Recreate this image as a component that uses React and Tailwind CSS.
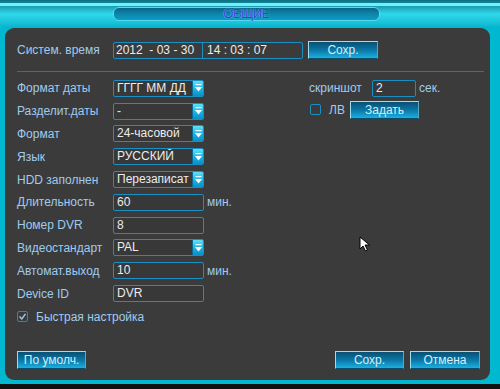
import React from 'react';

const font = { fontFamily: '"Liberation Sans", Arial, sans-serif' };

const Arrow = () => (
  <div className="w-[11px] h-full bg-gradient-to-b from-[#5fe0f8] via-[#19b6e6] to-[#0a8fc8] flex items-center justify-center border-l border-[#0a6a90]">
    <svg width="9" height="10" viewBox="0 0 9 10">
      <rect x="1.5" y="1" width="6" height="1.2" fill="#e8f8ff" />
      <polygon points="1,4 8,4 4.5,8.5" fill="#ffffff" />
    </svg>
  </div>
);

const Input = ({ value, w = 'w-[91px]', select }) => (
  <div className={`${w} h-[17px] border border-[#1a8fc4] rounded-[2px] bg-[#383838] flex items-stretch overflow-hidden`}>
    <span className="flex-1 pl-[3px] text-[#ececec] text-[12px] leading-[15px] whitespace-nowrap">{value}</span>
    {select && <Arrow />}
  </div>
);

const Btn = ({ children, w = 'w-[70px]' }) => (
  <div className={`${w} h-[18px] border border-t-[#9fdcf0] border-l-[#9fdcf0] border-b-[#0a4a66] border-r-[#5aa8c0] bg-gradient-to-b from-[#0a4f73] via-[#0a77a6] to-[#1bb0e0] flex items-center justify-center text-[12px] text-[#d6eefa]`}>
    {children}
  </div>
);

const Row = ({ label, children }) => (
  <div className="h-[22.8px] flex items-center">
    <span className="w-[96px] text-[#9fcbef] text-[12px] whitespace-nowrap">{label}</span>
    {children}
  </div>
);

const Unit = ({ children }) => <span className="ml-[3px] text-[#9fcbef] text-[12px]">{children}</span>;

export default function App() {
  return (
    <div style={font} className="w-[500px] h-[389px] bg-[#00b8d0] flex flex-col overflow-hidden relative">
      <div className="h-[28px] shrink-0 relative bg-gradient-to-b from-[#0a7080] via-[#30d8ec] to-[#00b4cc]">
        <div className="absolute top-[3px] left-0 right-0 h-[3px] bg-[#6ef0ff]"></div>
        <div className="absolute left-[113px] top-[7px] w-[267px] h-[14px] rounded-[6px] border border-[#58d8ec] bg-gradient-to-b from-[#0a6486] via-[#0c86ac] to-[#0c9cc4]"></div>
        <div className="absolute left-[113px] top-[6px] w-[267px] h-[16px] flex items-center justify-center">
          <span className="text-[13px] leading-[16px] text-[#3040e0] tracking-[-0.5px]" style={{ textShadow: '0 0 1px #b0f0ff' }}>ОБЩИЕ</span>
        </div>
      </div>

      <div className="ml-[5px] mr-[10px] h-[352px] shrink-0 rounded-[9px] bg-[#3b3b3b] pl-[12px] pr-[5px] pt-[13px] flex flex-col">
        <div className="flex items-center h-[18px]">
          <span className="w-[96px] text-[#9fcbef] text-[12px]">Систем. время</span>
          <div className="w-[190px] h-[17px] border border-[#1a8fc4] rounded-[2px] flex items-center text-[#ececec] text-[12px]">
            <span className="w-[89px] pl-[2px] whitespace-pre border-r border-[#1a8fc4] h-full leading-[15px]">2012  - 03 - 30</span>
            <span className="pl-[4px] whitespace-pre leading-[15px]">14 : 03 : 07</span>
          </div>
          <div className="ml-[5px]"><Btn>Сохр.</Btn></div>
        </div>
        <div className="mt-[12px] mr-[1px] h-[1px] bg-[#0b80a8]"></div>

        <div className="mt-[5px] flex">
          <div className="w-[292px] flex flex-col">
            <Row label="Формат даты"><Input value="ГГГГ ММ ДД" select /></Row>
            <Row label="Разделит.даты"><Input value="-" select /></Row>
            <Row label="Формат"><Input value="24-часовой" select /></Row>
            <Row label="Язык"><Input value="РУССКИЙ" select /></Row>
            <Row label="HDD заполнен"><Input value="Перезаписат" select /></Row>
            <Row label="Длительность"><Input value="60" /><Unit>мин.</Unit></Row>
            <Row label="Номер DVR"><Input value="8" /></Row>
            <Row label="Видеостандарт"><Input value="PAL" select /></Row>
            <Row label="Автомат.выход"><Input value="10" /><Unit>мин.</Unit></Row>
            <Row label="Device ID"><Input value="DVR" /></Row>
            <div className="h-[24px] flex items-center">
              <div className="w-[11px] h-[11px] border border-[#1a8fc4] rounded-[2px] flex items-center justify-center mr-[8px]">
                <svg width="9" height="9" viewBox="0 0 9 9"><polyline points="1.5,4.5 3.8,7 7.5,1.8" fill="none" stroke="#9fcbef" strokeWidth="1.4" /></svg>
              </div>
              <span className="text-[#9fcbef] text-[12px]">Быстрая настройка</span>
            </div>
          </div>
          <div className="flex flex-col">
            <div className="h-[22.8px] flex items-center">
              <span className="w-[63px] text-[#9fcbef] text-[12px]">скриншот</span>
              <Input value="2" w="w-[44px]" />
              <Unit>сек.</Unit>
            </div>
            <div className="h-[20px] flex items-center">
              <div className="w-[11px] h-[11px] border border-[#1a8fc4] rounded-[2px] ml-[1px] mr-[8px]"></div>
              <span className="w-[21px] text-[#9fcbef] text-[12px]">ЛВ</span>
              <Btn w="w-[69px]">Задать</Btn>
            </div>
          </div>
        </div>

        <div className="mt-auto mb-[11px] flex items-center">
          <Btn w="w-[69px]">По умолч.</Btn>
          <div className="ml-auto flex gap-[6px] mr-[5px]">
            <Btn w="w-[69px]">Сохр.</Btn>
            <Btn w="w-[70px]">Отмена</Btn>
          </div>
        </div>
      </div>
      <div className="h-[4px] shrink-0"></div>
      <div className="flex-1 bg-[#101010]"></div>

      <svg className="absolute left-[359px] top-[236px]" width="12" height="17" viewBox="0 0 12 17">
        <polygon points="1,1 1,13 4,10 6.5,15 8.5,14 6,9 10.5,9" fill="#ffffff" stroke="#000000" strokeWidth="1" />
      </svg>
    </div>
  );
}
